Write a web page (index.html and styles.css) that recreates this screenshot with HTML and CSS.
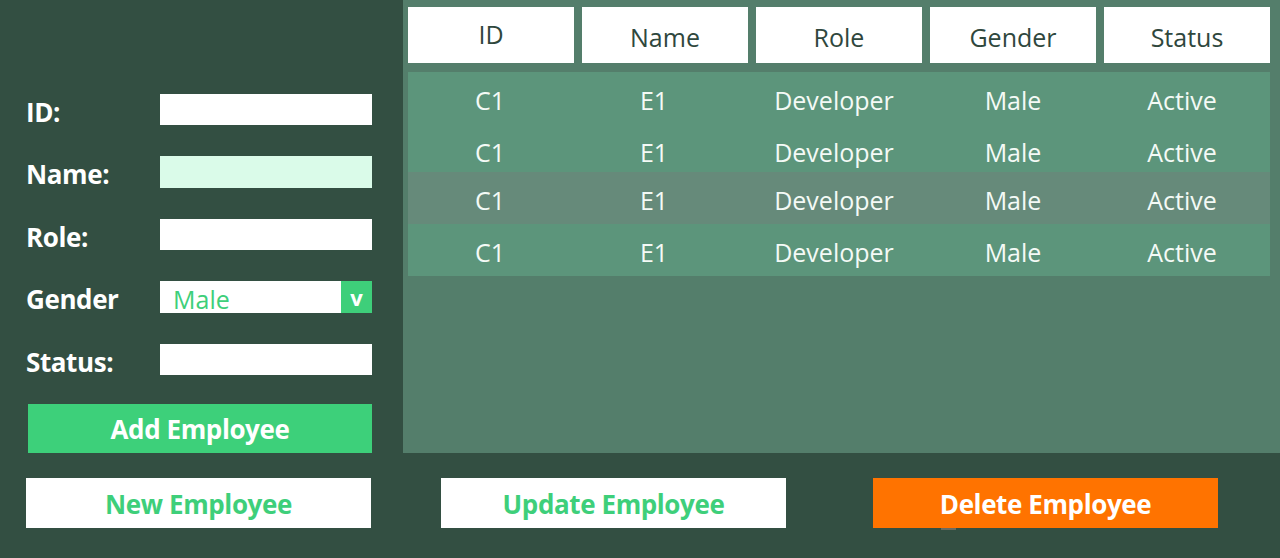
FILE: index.html
```html
<!DOCTYPE html>
<html>
<head>
<meta charset="utf-8">
<link rel="stylesheet" href="styles.css">
</head>
<body>
<div class="app">
  <div class="top">
    <form class="form">
      <div class="field"><label class="label">ID:</label><div class="input"></div></div>
      <div class="field"><label class="label">Name:</label><div class="input input-focus"></div></div>
      <div class="field"><label class="label">Role:</label><div class="input"></div></div>
      <div class="field"><label class="label">Gender</label><div class="input select"><span class="select-value">Male</span><span class="select-arrow">v</span></div></div>
      <div class="field"><label class="label">Status:</label><div class="input"></div></div>
      <div class="btn btn-add">Add Employee</div>
    </form>
    <section class="panel">
      <div class="head">
        <div class="hcell hcell-id">ID</div>
        <div class="hcell">Name</div>
        <div class="hcell">Role</div>
        <div class="hcell">Gender</div>
        <div class="hcell">Status</div>
      </div>
      <div class="rows">
        <div class="row row-1"><span>C1</span><span>E1</span><span>Developer</span><span>Male</span><span>Active</span></div>
        <div class="row row-2"><span>C1</span><span>E1</span><span>Developer</span><span>Male</span><span>Active</span></div>
        <div class="row row-3 row-sel"><span>C1</span><span>E1</span><span>Developer</span><span>Male</span><span>Active</span></div>
        <div class="row row-4"><span>C1</span><span>E1</span><span>Developer</span><span>Male</span><span>Active</span></div>
      </div>
    </section>
  </div>
  <div class="actions">
    <div class="btn btn-light btn-new">New Employee</div>
    <div class="btn btn-light btn-update">Update Employee</div>
    <div class="btn btn-delete">Delete Employee</div>
  </div>
</div>
</body>
</html>
```

FILE: styles.css
```css
html, body {
  margin: 0;
  padding: 0;
}
body {
  background: #334f42;
  font-family: "Open Sans", "Noto Sans", sans-serif;
  width: 1280px;
  height: 558px;
  overflow: hidden;
}
.app {
  display: flex;
  flex-direction: column;
}
.top {
  display: flex;
  height: 453px;
}
.form {
  width: 403px;
  box-sizing: border-box;
  padding: 94px 0 0 26px;
  display: flex;
  flex-direction: column;
  gap: 31.5px;
  margin: 0;
}
.field {
  display: flex;
  align-items: center;
  height: 31px;
}
.label {
  width: 134px;
  color: #ffffff;
  font-weight: 700;
  font-size: 26px;
  letter-spacing: -0.4px;
  padding-top: 4px;
}
.input {
  width: 212px;
  height: 31px;
  background: #ffffff;
}
.input-focus {
  background: #dafbe9;
  height: 32px;
}
.select {
  display: flex;
  align-items: center;
  justify-content: space-between;
  height: 32px;
}
.select-value {
  color: #3ecf7a;
  font-size: 25px;
  padding-left: 13px;
  padding-top: 3px;
}
.select-arrow {
  width: 31px;
  height: 32px;
  background: #3ecf7a;
  color: #ffffff;
  font-weight: 700;
  font-size: 22px;
  display: flex;
  align-items: center;
  justify-content: center;
}
.btn {
  display: flex;
  align-items: center;
  justify-content: center;
  font-weight: 700;
  font-size: 26px;
  letter-spacing: -0.4px;
  box-sizing: border-box;
  padding-top: 2px;
}
.btn-add {
  width: 344px;
  height: 49px;
  margin-left: 2px;
  margin-top: -3px;
  background: #3dd07a;
  color: #ffffff;
}
.panel {
  flex: 1;
  background: #547e6b;
  padding: 7px 10px 0 5px;
  box-sizing: border-box;
}
.head {
  display: grid;
  grid-template-columns: repeat(5, 166px);
  gap: 8px;
  height: 56px;
}
.hcell {
  background: #ffffff;
  color: #2f473d;
  font-size: 25px;
  display: flex;
  align-items: center;
  justify-content: center;
  padding-top: 4px;
  box-sizing: border-box;
}
.hcell-id {
  padding-top: 0;
  padding-bottom: 2px;
}
.rows {
  margin-top: 9px;
  background: #5c957b;
  width: 862px;
}
.row {
  display: grid;
  grid-template-columns: 164px 164px 196px 162px 176px;
  align-items: start;
  color: #f4faf6;
  font-size: 25px;
  line-height: 32px;
  box-sizing: border-box;
}
.row span {
  text-align: center;
}
.row-1 {
  height: 50px;
  padding-top: 12px;
}
.row-2 {
  height: 50px;
  padding-top: 14px;
}
.row-3, .row-4 {
  height: 52px;
  padding-top: 12px;
}
.row-sel {
  background: #668a7a;
}
.actions {
  display: flex;
  padding-top: 25px;
  padding-left: 26px;
}
.actions .btn {
  width: 345px;
  height: 50px;
}
.btn-light {
  background: #ffffff;
  color: #3ecf7a;
}
.btn-update {
  margin-left: 70px;
}
.btn-delete {
  margin-left: 87px;
  background: #ff7300;
  color: #ffffff;
  position: relative;
}
.btn-delete::after {
  content: "";
  position: absolute;
  left: 68px;
  top: 50px;
  width: 15px;
  height: 2px;
  background: #6b6b60;
}
```
